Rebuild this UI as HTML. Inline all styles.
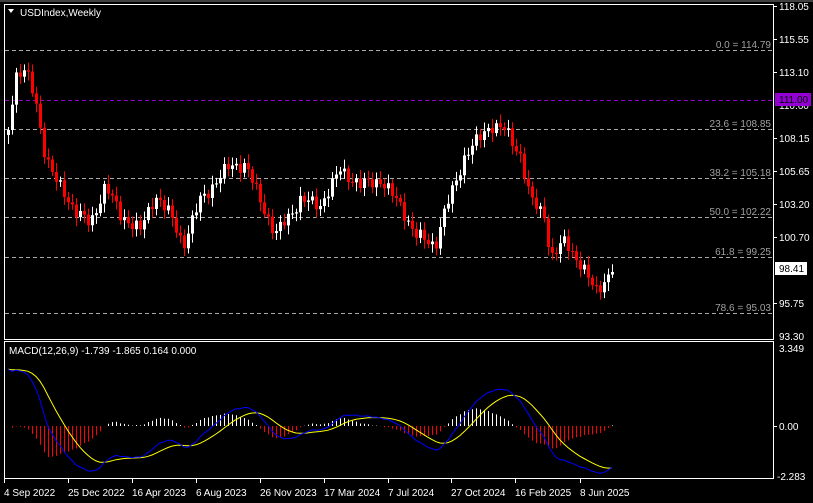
<!DOCTYPE html>
<html><head><meta charset="utf-8"><style>
html,body{margin:0;padding:0;background:#000;width:813px;height:503px;overflow:hidden}
svg{display:block}
text{font-family:"Liberation Sans",sans-serif;font-size:10px}
</style></head><body>
<svg id="s" width="813" height="503" xmlns="http://www.w3.org/2000/svg">
<rect width="813" height="503" fill="#000"/>
<line x1="0" y1="1" x2="813" y2="1" stroke="#808080"/>
<rect x="4.5" y="4.5" width="769" height="335" fill="none" stroke="#fff"/>
<rect x="4.5" y="341.5" width="769" height="137" fill="none" stroke="#fff"/>
<g id="grid" stroke="#aaa" stroke-dasharray="4,3">
<line x1="5" y1="50.5" x2="772" y2="50.5"/>
<line x1="5" y1="129.5" x2="772" y2="129.5"/>
<line x1="5" y1="178.5" x2="772" y2="178.5"/>
<line x1="5" y1="217.5" x2="772" y2="217.5"/>
<line x1="5" y1="257.5" x2="772" y2="257.5"/>
<line x1="5" y1="313.5" x2="772" y2="313.5"/>
</g>
<line x1="5" y1="100.5" x2="772" y2="100.5" stroke="#9400d3" stroke-dasharray="4,3"/>
<g fill="#a0a0a0" text-anchor="end">
<text x="771" y="48">0.0 = 114.79</text>
<text x="771" y="127">23.6 = 108.85</text>
<text x="771" y="176">38.2 = 105.18</text>
<text x="771" y="215">50.0 = 102.22</text>
<text x="771" y="255">61.8 = 99.25</text>
<text x="771" y="311">78.6 = 95.03</text>
</g>
<g id="c"></g>
<g id="m"></g>
<path d="M8 9 l6 0 l-3 4z" fill="#fff"/>
<text x="20" y="16" fill="#fff">USDIndex,Weekly</text>
<text x="9" y="354" fill="#fff">MACD(12,26,9) -1.739 -1.865 0.164 0.000</text>
<g stroke="#fff">
<line x1="774" y1="6.5" x2="777" y2="6.5"/><line x1="774" y1="39.5" x2="777" y2="39.5"/><line x1="774" y1="72.5" x2="777" y2="72.5"/><line x1="774" y1="138.5" x2="777" y2="138.5"/><line x1="774" y1="171.5" x2="777" y2="171.5"/><line x1="774" y1="204.5" x2="777" y2="204.5"/><line x1="774" y1="237.5" x2="777" y2="237.5"/><line x1="774" y1="303.5" x2="777" y2="303.5"/><line x1="774" y1="426.5" x2="777" y2="426.5"/>
</g>
<g fill="#fff">
<text x="779" y="10">118.05</text><text x="779" y="43">115.55</text><text x="779" y="76">113.10</text><text x="779" y="109">110.60</text><text x="779" y="142">108.15</text><text x="779" y="175">105.65</text><text x="779" y="208">103.20</text><text x="779" y="241">100.70</text><text x="779" y="307">95.75</text><text x="779" y="340">93.30</text>
<text x="779" y="352">3.349</text><text x="779" y="430">0.00</text><text x="777" y="480">-2.283</text>
</g>
<rect x="775" y="93" width="36" height="13" fill="#9400d3"/>
<text x="779" y="103" fill="#000">111.00</text>
<rect x="775" y="262" width="32" height="13" fill="#fff"/>
<text x="779" y="272" fill="#000">98.41</text>
<g fill="#fff">
<text x="4" y="496">4 Sep 2022</text><text x="68" y="496">25 Dec 2022</text><text x="132" y="496">16 Apr 2023</text><text x="196" y="496">6 Aug 2023</text><text x="260" y="496">26 Nov 2023</text><text x="324" y="496">17 Mar 2024</text><text x="388" y="496">7 Jul 2024</text><text x="451" y="496">27 Oct 2024</text><text x="515" y="496">16 Feb 2025</text><text x="580" y="496">8 Jun 2025</text>
</g>
<g stroke="#fff"><line x1="4.5" y1="479" x2="4.5" y2="483"/><line x1="68.5" y1="479" x2="68.5" y2="483"/><line x1="132.5" y1="479" x2="132.5" y2="483"/><line x1="196.5" y1="479" x2="196.5" y2="483"/><line x1="260.5" y1="479" x2="260.5" y2="483"/><line x1="324.5" y1="479" x2="324.5" y2="483"/><line x1="388.5" y1="479" x2="388.5" y2="483"/><line x1="451.5" y1="479" x2="451.5" y2="483"/><line x1="515.5" y1="479" x2="515.5" y2="483"/><line x1="580.5" y1="479" x2="580.5" y2="483"/></g>
</svg>
<script>
var K=[[8,130],[15,75],[25,70],[35,100],[45,155],[55,180],[75,210],[90,225],[105,185],[120,215],[140,230],[155,195],[170,215],[183,245],[200,200],[230,165],[245,165],[260,200],[275,235],[300,200],[320,205],[340,170],[360,185],[380,180],[400,205],[415,235],[435,245],[445,210],[465,155],[490,125],[505,130],[520,155],[530,200],[545,215],[550,260],[565,240],[580,265],[595,290],[610,275]];
function yAt(x){if(x<=K[0][0])return K[0][1];for(var i=0;i<K.length-1;i++){if(x>=K[i][0]&&x<=K[i+1][0]){var t=(x-K[i][0])/(K[i+1][0]-K[i][0]);return K[i][1]+t*(K[i+1][1]-K[i][1]);}}return K[K.length-1][1];}
var NS="http://www.w3.org/2000/svg",c=document.getElementById('c'),m=document.getElementById('m');
function el(g,t,a){var e=document.createElementNS(NS,t);for(var k in a)e.setAttribute(k,a[k]);g.appendChild(e);return e;}
var closes=[],prev=135;
for(var i=0;i<152;i++){var x=8+4*i;var cl=yAt(x)+Math.sin(i*2.3)*5+Math.sin(i*0.9)*3;
 if(i==151)cl=272;
 var op=prev;var hi=Math.min(op,cl)-3-Math.abs(Math.sin(i*1.7))*6;var lo=Math.max(op,cl)+3+Math.abs(Math.cos(i*1.3))*6;
 var up=cl<op;var col=up?"#fff":"#f00";
 el(c,'line',{x1:x+.5,x2:x+.5,y1:hi,y2:lo,stroke:col});
 el(c,'rect',{x:x-1,y:Math.min(op,cl),width:3,height:Math.max(1,Math.abs(op-cl)),fill:col});
 closes.push(118.05-(cl-6)/13.333);prev=cl;}
function ema(a,n){var k=2/(n+1),r=[a[0]];for(var i=1;i<a.length;i++)r.push(a[i]*k+r[i-1]*(1-k));return r;}
var e12=ema(closes,12),e26=ema(closes,26),mac=[],i;
for(i=0;i<closes.length;i++)mac.push(e12[i]-e26[i]+ (i<10?2.5*(1-i/10):0));
var sig=ema(mac,9);var Y=function(v){return 426-v*22.7;};
var pm="",ps="";
for(i=0;i<closes.length;i++){var x=8+4*i;var h=(mac[i]-sig[i])*1.0;
 el(m,'line',{x1:x+.5,x2:x+.5,y1:426,y2:426-h*22.7,stroke:h>=0?"#fff":"#f00"});
 pm+=(i?"L":"M")+x+" "+Y(mac[i]).toFixed(1);ps+=(i?"L":"M")+x+" "+Y(sig[i]).toFixed(1);}
el(m,'path',{d:ps,fill:"none",stroke:"#ff0"});
el(m,'path',{d:pm,fill:"none",stroke:"#00f"});
</script>
</body></html>
